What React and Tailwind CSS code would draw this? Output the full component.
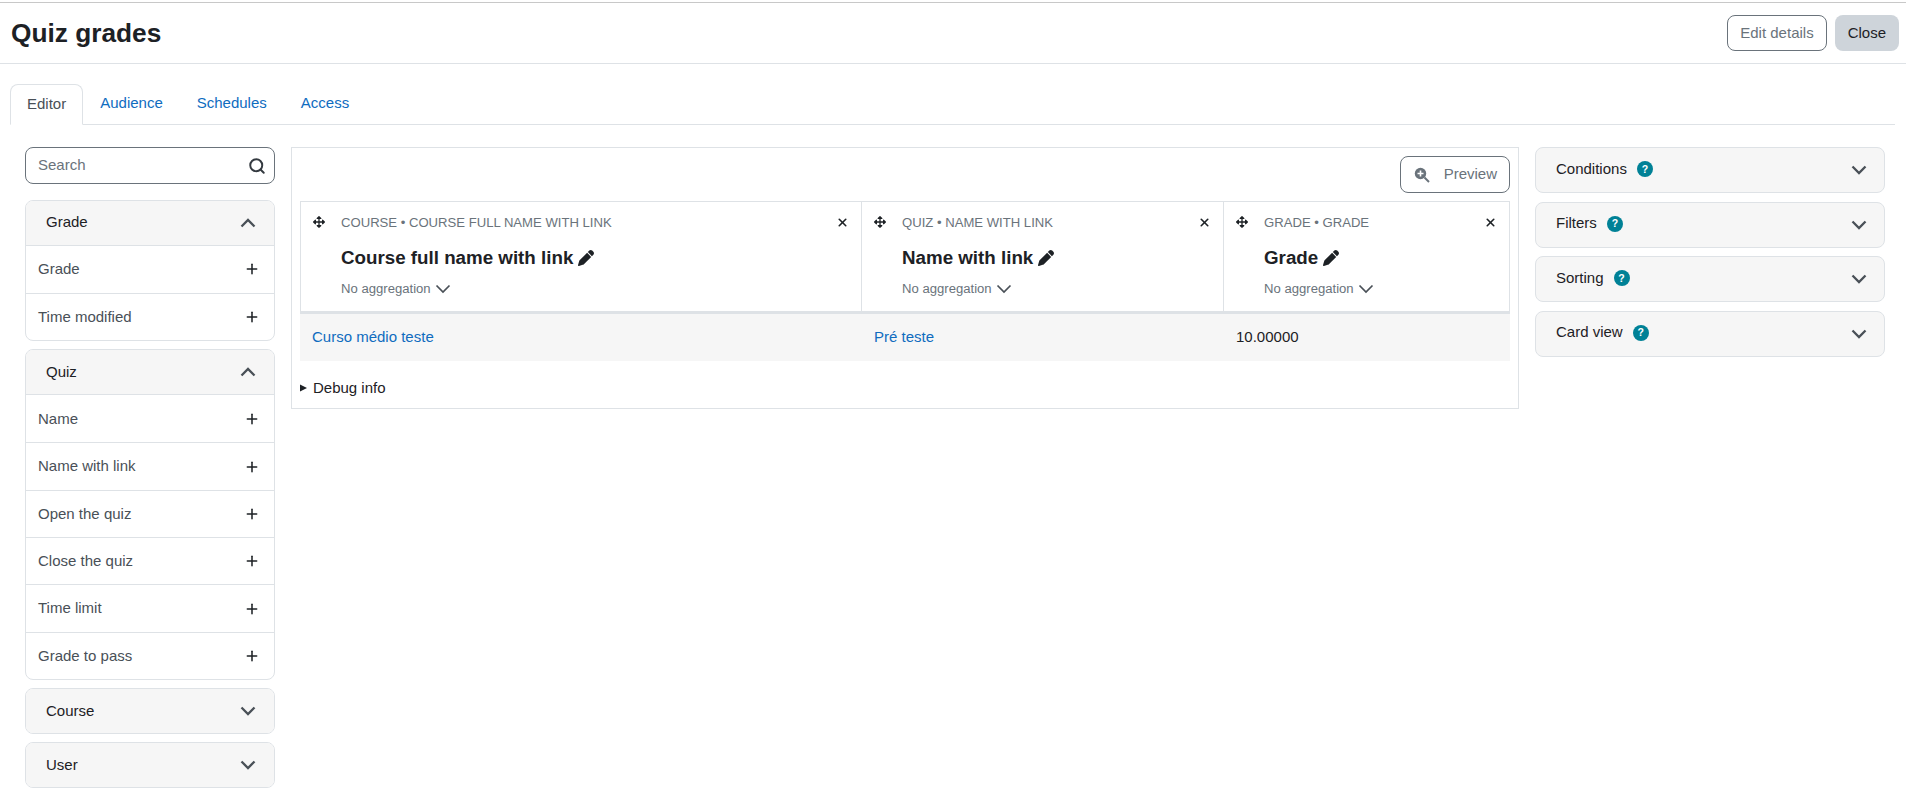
import React from 'react';
import { Plus, Search, X } from 'lucide-react';
import { FaArrowsAlt } from 'react-icons/fa';
import { FaPen } from 'react-icons/fa6';

const tabs = ['Audience', 'Schedules', 'Access'];

const sections = [
  { title: 'Grade', open: true, items: ['Grade', 'Time modified'] },
  { title: 'Quiz', open: true, items: ['Name', 'Name with link', 'Open the quiz', 'Close the quiz', 'Time limit', 'Grade to pass'] },
  { title: 'Course', open: false, items: [] },
  { title: 'User', open: false, items: [] },
];

const columns = [
  { label: 'COURSE • COURSE FULL NAME WITH LINK', title: 'Course full name with link', width: 'w-[561px]' },
  { label: 'QUIZ • NAME WITH LINK', title: 'Name with link', width: 'w-[362px]' },
  { label: 'GRADE • GRADE', title: 'Grade', width: 'flex-1' },
];

const panels = ['Conditions', 'Filters', 'Sorting', 'Card view'];

const Chevron = ({ up = false, thin = false }) => (
  <svg viewBox="0 0 16 10" className={`w-[16px] h-[10px] text-[#495057] shrink-0 ${up ? 'rotate-180' : ''}`} fill="none" stroke="currentColor" strokeWidth={thin ? 1.7 : 2.3}>
    <polyline points="1.5,1.5 8,8 14.5,1.5" />
  </svg>
);

const SidebarSection = ({ section }) => (
  <div className="border border-[#dee2e6] rounded-lg overflow-hidden">
    <div className={`flex items-center justify-between pl-5 pr-[18px] bg-[#f6f6f6] text-[#1d2125] ${section.open ? 'h-[45px] border-b border-[#dee2e6]' : 'h-[44px]'}`}>
      <span>{section.title}</span>
      <Chevron up={section.open} />
    </div>
    {section.items.map((item, i) => (
      <div key={item} className={`flex items-center justify-between h-[47.3px] pl-3 pr-[14px] text-[#495057] ${i > 0 ? 'border-t border-[#dee2e6]' : ''}`}>
        <span>{item}</span>
        <Plus className="w-[16px] h-[16px] text-[#1d2125]" strokeWidth={2.3} />
      </div>
    ))}
  </div>
);

const ColumnHeader = ({ column, last }) => (
  <div className={`${column.width} h-[109px] flex px-3 pt-[11px] ${last ? '' : 'border-r border-[#dee2e6]'}`}>
    <FaArrowsAlt className="w-[12px] h-[12px] mt-[3px] text-[#1d2125] shrink-0" />
    <div className="ml-[16px] flex-1 min-w-0">
      <div className="flex items-center justify-between h-[20px]">
        <span className="text-[13.125px] text-[#6a737b]">{column.label}</span>
        <X className="w-[13px] h-[13px] -mt-[2px] text-[#1d2125]" strokeWidth={3} />
      </div>
      <div className="flex items-center gap-[5px] mt-[13px] h-[24px] text-[18.75px] font-bold text-[#1d2125]">
        <span>{column.title}</span>
        <FaPen className="w-[16px] h-[16px]" />
      </div>
      <div className="flex items-center gap-[4px] mt-[8px] text-[13.125px] text-[#6a737b]">
        <span>No aggregation</span>
        <Chevron thin />
      </div>
    </div>
  </div>
);

export default function App() {
  return (
    <div className="min-h-[798px] bg-white text-[15px] leading-[22.5px] text-[#1d2125] font-['Liberation_Sans',sans-serif]">
      <div className="border-t border-[#c8c8c8] mt-[2px]" />
      <header className="flex items-center justify-between h-[61px] pl-[11px] pr-[7px] border-b border-[#dee2e6]">
        <h1 className="text-[26.25px] font-bold leading-[32px]">Quiz grades</h1>
        <div className="flex items-center gap-2">
          <button className="h-[36px] px-[12px] border border-[#6a737b] rounded-lg text-[#6a737b]">Edit details</button>
          <button className="h-[36px] px-[13px] rounded-lg bg-[#ced4da] text-[#1d2125]">Close</button>
        </div>
      </header>

      <nav className="flex items-end h-[61px] ml-[10px] mr-[11px] border-b border-[#dee2e6]">
        <div className="h-[41px] -mb-px px-4 pt-[8px] border border-b-white border-[#dee2e6] rounded-t-lg bg-white text-[#495057]">Editor</div>
        {tabs.map((tab) => (
          <div key={tab} className="h-[40px] px-[17px] pt-[8px] text-[#0f6cbf]">{tab}</div>
        ))}
      </nav>

      <main className="flex items-start mt-[22px] ml-[25px] mr-[21px]">
        <aside className="w-[250px] shrink-0 flex flex-col gap-2">
          <div className="flex items-center justify-between h-[37px] pl-3 pr-[8px] mb-[7.6px] border border-[#6a737b] rounded-lg">
            <span className="text-[#6a737b]">Search</span>
            <Search className="w-[18px] h-[18px] text-[#343a40]" strokeWidth={2.6} />
          </div>
          {sections.map((section) => <SidebarSection key={section.title} section={section} />)}
        </aside>

        <section className="w-[1228px] ml-[16px] h-[262px] border border-[#dee2e6] px-[8px] pt-[8px]">
          <div className="flex justify-end">
            <button className="flex items-center gap-[14px] h-[37px] pl-[13px] pr-3 border border-[#6a737b] rounded-lg text-[#6a737b]">
              <svg viewBox="0 0 16 16" className="w-[16px] h-[16px]">
                <circle cx="6.5" cy="6.5" r="5.7" fill="currentColor" />
                <path d="M6.5 3.5v6M3.5 6.5h6" stroke="#fff" strokeWidth="1.6" />
                <path d="M10.5 10.5L15 15" stroke="currentColor" strokeWidth="1.9" />
              </svg>
              Preview
            </button>
          </div>
          <div className="flex mt-[8px] border border-[#dee2e6] border-b-[3px]">
            {columns.map((column, i) => <ColumnHeader key={column.label} column={column} last={i === 2} />)}
          </div>
          <div className="flex items-center h-[47px] bg-[#f6f6f6]">
            <a className="w-[562px] pl-3 text-[#0f6cbf]">Curso médio teste</a>
            <a className="w-[362px] pl-3 text-[#0f6cbf]">Pré teste</a>
            <span className="pl-3">10.00000</span>
          </div>
          <div className="flex items-center gap-[6px] mt-[16px]">
            <svg viewBox="0 0 7 8" className="w-[7px] h-[8px]">
              <polygon points="0,0.5 7,4 0,7.5" fill="currentColor" />
            </svg>
            <span>Debug info</span>
          </div>
        </section>

        <aside className="w-[350px] ml-[16px] flex flex-col gap-[8.5px]">
          {panels.map((panel) => (
            <div key={panel} className="flex items-center justify-between h-[46px] pl-5 pr-[17px] bg-[#f6f6f6] border border-[#dee2e6] rounded-lg">
              <div className="flex items-center gap-[10px] -mt-[2px]">
                <span>{panel}</span>
                <span className="flex items-center justify-center w-[16px] h-[16px] rounded-full bg-[#008196] text-white text-[10.5px] leading-none font-bold">?</span>
              </div>
              <Chevron />
            </div>
          ))}
        </aside>
      </main>
    </div>
  );
}
